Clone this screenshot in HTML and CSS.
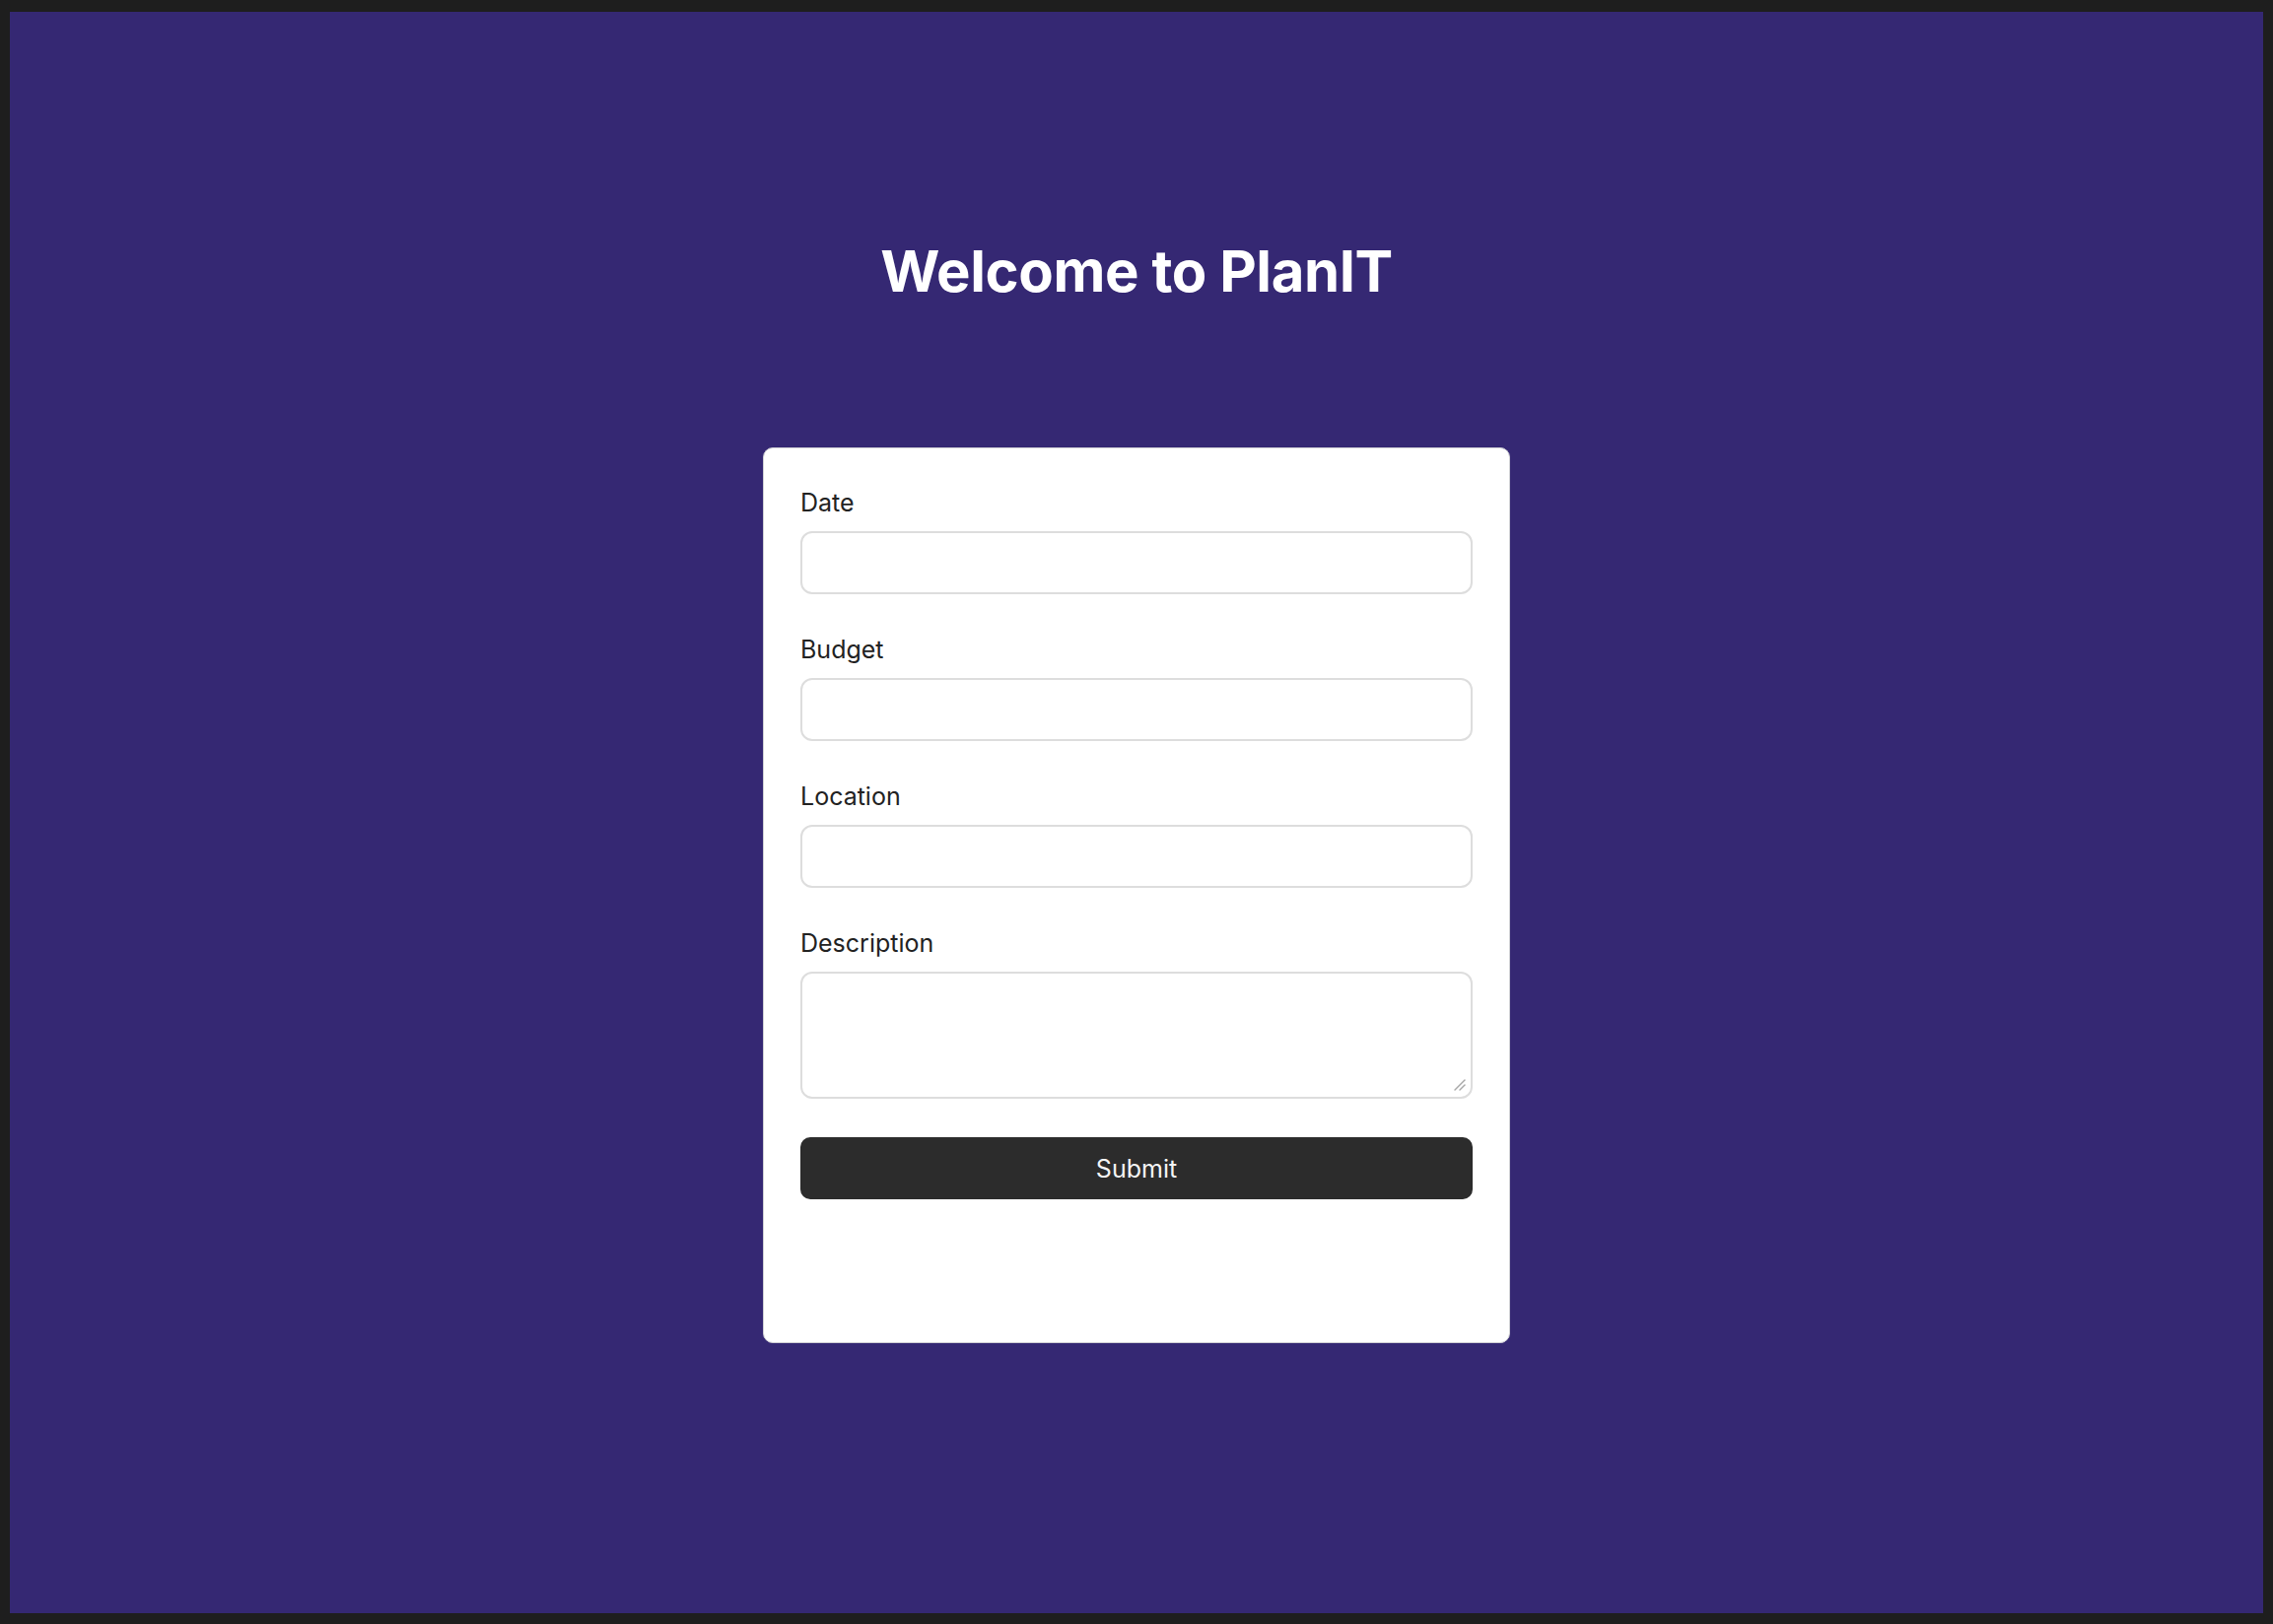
FILE: index.html
```html
<!DOCTYPE html>
<html lang="en">
<head>
<meta charset="utf-8">
<title>PlanIT</title>
<link rel="stylesheet" href="styles.css">
</head>
<body>
<div class="frame">
  <h1 class="title">Welcome to PlanIT</h1>
  <form class="card">
    <div class="field">
      <label class="label" for="date">Date</label>
      <input class="input" id="date" type="text">
    </div>
    <div class="field">
      <label class="label" for="budget">Budget</label>
      <input class="input" id="budget" type="text">
    </div>
    <div class="field">
      <label class="label" for="location">Location</label>
      <input class="input" id="location" type="text">
    </div>
    <div class="field">
      <label class="label" for="description">Description</label>
      <div class="textarea-wrap">
        <textarea class="input textarea" id="description"></textarea>
        <svg class="grip" width="12" height="12" viewBox="0 0 12 12" aria-hidden="true">
          <line x1="1" y1="11" x2="11" y2="1" stroke="#a8a8a8" stroke-width="1.4" stroke-linecap="round"/>
          <line x1="6" y1="11" x2="11" y2="6" stroke="#a8a8a8" stroke-width="1.4" stroke-linecap="round"/>
        </svg>
      </div>
    </div>
    <button class="submit" type="button">Submit</button>
  </form>
</div>
</body>
</html>
```
FILE: styles.css
```css
html, body {
  margin: 0;
  padding: 0;
  background: #1e1e1e;
}
body {
  font-family: Inter, "Noto Sans", sans-serif;
}
.frame {
  margin: 12px 10px 11px 10px;
  height: 1625px;
  background: #352873;
  display: flex;
  flex-direction: column;
  align-items: center;
  padding-top: 228px;
  box-sizing: border-box;
}
.title {
  margin: 0 0 144px 0;
  color: #ffffff;
  font-size: 58px;
  font-weight: 700;
  line-height: 70px;
  letter-spacing: -0.4px;
}
.card {
  width: 758px;
  box-sizing: border-box;
  background: #ffffff;
  border: 1px solid #cfcfd4;
  border-radius: 10px;
  padding: 39px 37px 145px 37px;
  display: flex;
  flex-direction: column;
}
.field {
  display: flex;
  flex-direction: column;
  gap: 13px;
  margin-bottom: 40px;
}
.field:last-of-type {
  margin-bottom: 39px;
}
.label {
  font-size: 25px;
  line-height: 32px;
  color: #222222;
}
.input {
  height: 64px;
  box-sizing: border-box;
  border: 2px solid #dddddd;
  border-radius: 12px;
  background: #ffffff;
  font-family: inherit;
  font-size: 24px;
  padding: 0 16px;
  outline: none;
}
.textarea-wrap {
  position: relative;
  display: flex;
  flex-direction: column;
}
.textarea {
  height: 129px;
  resize: none;
  padding: 12px 16px;
}
.grip {
  position: absolute;
  right: 7px;
  bottom: 8px;
}
.submit {
  height: 63px;
  border: none;
  border-radius: 10px;
  background: #2c2c2c;
  color: #f5f5f5;
  font-family: inherit;
  font-size: 25px;
  cursor: pointer;
}
```
